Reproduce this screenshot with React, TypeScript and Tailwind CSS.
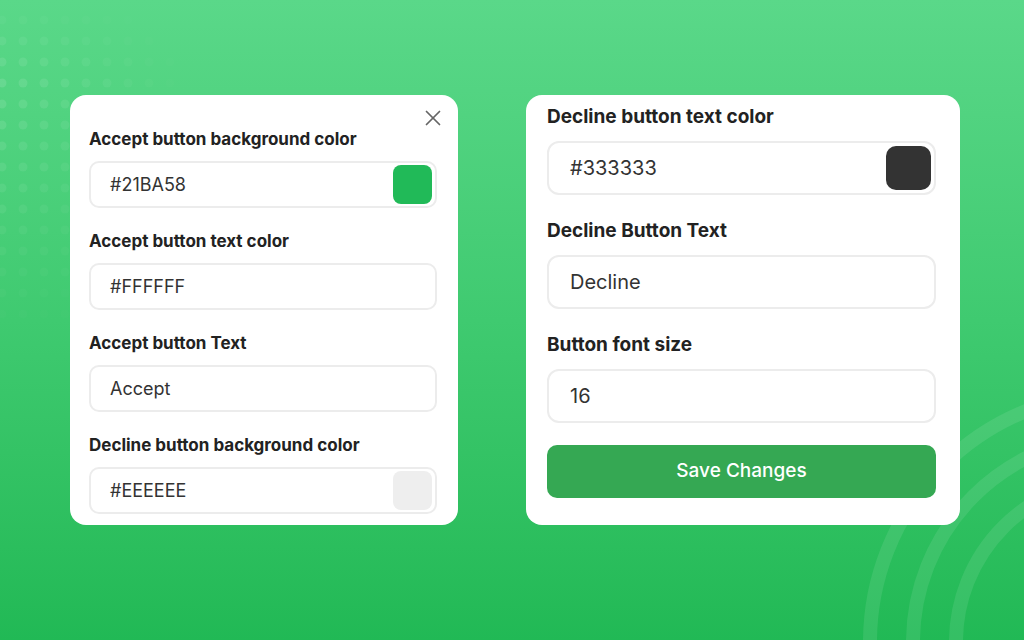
import React from "react";
import { X } from "lucide-react";

const font = { fontFamily: "Inter, 'Noto Sans', sans-serif" };

const DotPattern: React.FC = () => {
  const dots: React.ReactNode[] = [];
  for (let r = 0; r < 15; r++) {
    for (let c = 0; c < 10; c++) {
      const x = 2 + c * 21;
      const y = 20 + r * 21;
      const fadeX = Math.max(0, 1 - c / 9);
      const fadeY = Math.min(1, (r + 1) / 4) * Math.max(0, 1 - r / 16);
      const op = 0.14 * fadeX * fadeY;
      if (op <= 0.01) continue;
      dots.push(<circle key={`${r}-${c}`} cx={x} cy={y} r={4.5} fill="#ffffff" opacity={op} />);
    }
  }
  return (
    <svg className="absolute left-0 top-0" width="220" height="340">
      {dots}
    </svg>
  );
};

const Arcs: React.FC = () => (
  <svg className="absolute right-0 bottom-0" width="184" height="260" viewBox="0 0 184 260">
    {[249, 206, 163].map((r) => (
      <circle key={r} cx={279} cy={262} r={r} fill="none" stroke="#ffffff" strokeOpacity={0.09} strokeWidth={14} />
    ))}
  </svg>
);

type FieldProps = {
  label: string;
  value: string;
  swatch?: string;
  big?: boolean;
};

const Field: React.FC<FieldProps> = ({ label, value, swatch, big }) => (
  <div className={big ? "flex flex-col mb-[25px]" : "flex flex-col mb-[22px]"}>
    <div
      className={
        big
          ? "text-[19px] leading-[22px] font-bold text-[#222]"
          : "text-[17px] leading-[22px] font-bold text-[#222]"
      }
    >
      {label}
    </div>
    <div
      className={
        big
          ? "mt-[13px] h-[54px] rounded-[12px] border-2 border-[#ececec] flex items-center justify-between pl-[21px] pr-[3px]"
          : "mt-[11px] h-[47px] rounded-[10px] border-2 border-[#ececec] flex items-center justify-between pl-[19px] pr-[3px]"
      }
    >
      <span className={big ? "text-[20px] text-[#333]" : "text-[18px] text-[#333]"}>{value}</span>
      {swatch && (
        <span
          className={big ? "w-[45px] h-[44px] rounded-[10px]" : "w-[39px] h-[39px] rounded-[8px]"}
          style={{ backgroundColor: swatch }}
        />
      )}
    </div>
  </div>
);

const App: React.FC = () => {
  return (
    <div
      className="relative w-[1024px] h-[640px] overflow-hidden bg-gradient-to-b from-[#5ad889] via-[#3fca70] to-[#21b955]"
      style={font}
    >
      <DotPattern />
      <Arcs />
      <div className="relative flex items-start gap-[68px] pl-[70px] pt-[95px]">
        {/* left card */}
        <div className="relative w-[388px] h-[430px] bg-white rounded-[16px] pt-[33px] pl-[19px] pr-[21px] overflow-hidden">
          <button className="absolute right-[12px] top-[10px] text-[#666]">
            <X className="w-[26px] h-[26px]" strokeWidth={1.6} />
          </button>
          <Field label="Accept button background color" value="#21BA58" swatch="#21ba58" />
          <Field label="Accept button text color" value="#FFFFFF" swatch="#ffffff" />
          <Field label="Accept button Text" value="Accept" />
          <Field label="Decline button background color" value="#EEEEEE" swatch="#eeeeee" />
        </div>

        {/* right card */}
        <div className="w-[434px] h-[430px] bg-white rounded-[16px] pt-[11px] pl-[21px] pr-[24px] overflow-hidden">
          <Field big label="Decline button text color" value="#333333" swatch="#333333" />
          <Field big label="Decline Button Text" value="Decline" />
          <Field big label="Button font size" value="16" />
          <button className="-mt-[3px] w-full h-[53px] rounded-[10px] bg-[#35a853] text-white text-[19px] font-medium">
            Save Changes
          </button>
        </div>
      </div>
    </div>
  );
};

export default App;
